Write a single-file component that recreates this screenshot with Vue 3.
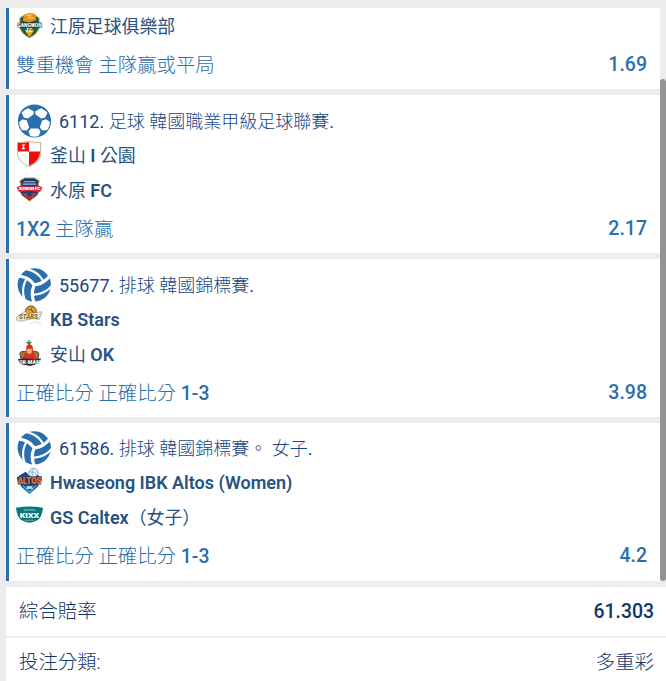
<template>
  <div class="betslip">
    <div class="events">
      <div v-for="(bet, i) in bets" :key="i" class="event">
        <div v-if="bet.sport" class="event-head">
          <svg v-if="bet.sport === 'football'" class="sport" viewBox="0 0 34 34">
            <circle cx="17" cy="17" r="16.6" fill="#2a6fac" />
            <g fill="#fff">
              <path d="M10.5 4.2 16.2 7.2V10.2L10.2 14.5 6.4 13.5 4 8.8Q7 5.2 10.5 4.2Z" />
              <path d="M23.5 4.2 17.8 7.2V10.2L23.8 14.5 27.6 13.5 30 8.8Q27 5.2 23.5 4.2Z" />
              <path d="M1.5 18 5.4 15.2 9.4 16.5 11.7 23.4 9.3 26.5 4.3 26.1Q1.8 22.5 1.5 18Z" />
              <path d="M32.5 18 28.6 15.2 24.6 16.5 22.3 23.4 24.7 26.5 29.7 26.1Q32.2 22.5 32.5 18Z" />
              <path d="M13.3 24.4H20.7L23 27.6 21.2 32Q17 33.3 12.8 32L11 27.6Z" />
            </g>
          </svg>
          <svg v-else class="sport" viewBox="4 4 496 504">
            <path
              fill="#2a6fac"
              transform="rotate(204 252 256)"
              d="M231.39 243.48a285.56 285.56 0 0 0-22.7-105.7c-90.8 42.4-157.5 122.4-180.3 216.8a249 249 0 0 0 56.9 81.1 333.87 333.87 0 0 1 146.1-192.2zm-36.9-134.4a284.23 284.23 0 0 0-57.4-70.7c-91 49.8-144.8 152.9-125 262.2 33.4-83.1 98.4-152 182.4-191.5zm187.6 165.1c8.6-99.8-27.3-197.5-97.5-264.4-14.7-1.7-51.6-5.5-98.9 8.5A333.87 333.87 0 0 1 279.19 241a285 285 0 0 0 102.9 33.18zm-124.7 9.5a286.33 286.33 0 0 0-80.2 72.6c82 57.3 184.5 75.1 277.5 47.8a247.15 247.15 0 0 0 42.2-89.9 336.1 336.1 0 0 1-80.9 10.4c-54.6-.1-108.9-14.1-158.6-40.9zm-98.3 99.7c-15.2 26-25.7 54.4-32.1 84.2a247.07 247.07 0 0 0 289-22.1c-112.9 16.1-203.3-24.8-256.9-62.1zm180.3-360.6c55.3 70.4 82.5 161.2 74.6 253.6a286.59 286.59 0 0 0 89.7-14.2c0-2 .3-4 .3-6 0-107.8-68.7-199.1-164.6-233.4z"
            />
          </svg>
          <span class="label"
            ><span v-for="(run, r) in runs(bet.title)" :key="r" :class="{ latin: run.latin }">{{ run.text }}</span></span
          >
        </div>
        <div v-for="team in bet.teams" :key="team.name" class="team">
          <svg class="logo" viewBox="0 0 28 28">
            <g v-if="team.logo === 'gangwon'">
              <path d="M4 6Q14-2 24 6L24 17Q22 23 14 27 6 23 4 17Z" fill="#12604e" stroke="#d9b65a" />
              <path d="M7 9 8 3 14 .8 20 2 21 8 14 11Z" fill="#f28b1d" />
              <path d="M10 4 15 3 13 6 18 6" fill="none" stroke="#ffc64c" stroke-width="1.5" />
              <path d="M9 19 14 26 19 19Z" fill="#f5a32b" />
              <text x="14" y="15.5" class="mark gangwon">GANGWON</text>
              <text x="14" y="20.5" class="mark fc">FC</text>
            </g>
            <g v-else-if="team.logo === 'busan'">
              <path d="M1.5 1.5Q8 2 13.5 .5 19 2 25.5 1.5V13Q25 22 13.5 26.5 2 22 1.5 13Z" fill="#fff" stroke="#b3a16c" stroke-width=".8" />
              <path d="M2 2Q8 2.5 13.5 1V11H2ZM13.5 11H25Q25 21 13.5 26Z" fill="#f20d0d" />
              <path d="M6 3.5H9.5V4.5H8.5V7.5H9.5V8.5H6V7.5H7V4.5H6Z" fill="#fff" />
            </g>
            <g v-else-if="team.logo === 'suwon'">
              <path d="M4 5 9 2H19L24 5 23 10 26 12 22 20 14 26 6 20 2 12 5 10Z" fill="#173e73" stroke="#c6a453" />
              <path d="M8 6H20M7 8.5H21" stroke="#a9bfd8" stroke-width="1.2" />
              <path d="M.5 12 4 10 14 11 24 10 27.5 12 25 16.5 14 15.5 3 16.5Z" fill="#d62d4b" />
              <path d="M6.5 17.5H21.5L19 21 14 24.5 9 21Z" fill="#c72b42" />
              <path d="M12 16H16V21H12Z" fill="#173e73" />
              <text x="14" y="14.7" class="mark suwon">SUWON FC</text>
            </g>
            <g v-else-if="team.logo === 'stars'">
              <circle cx="15.5" cy="6.5" r="5.5" fill="#e9a51f" stroke="#554021" />
              <path d="M12 4Q18 5 19 11M17 2Q14 6 20 8" fill="none" stroke="#6b481b" stroke-width=".8" />
              <path d="M1 12 7 8 9 6 12 9 27 7 24 15 18 14 4 17 0 15Z" fill="#ede8d8" stroke="#796b4e" stroke-width=".5" />
              <text x="13" y="15" class="mark stars">STARS</text>
              <path d="M15 20 20 17 26 20" fill="none" stroke="#bbb" stroke-width=".6" />
            </g>
            <g v-else-if="team.logo === 'okman'">
              <path d="M6 12Q3 12 5 19H23Q25 12 21 12Z" fill="#9e783e" stroke="#574329" />
              <path d="M13.5 5V0M13.5 4 11 2M13.5 4 16 2" stroke="#288851" stroke-width="1.4" />
              <path d="M10 12 11 6 13.5 3.5 17 6 18 12 21 20H7Z" fill="#d92f20" />
              <path d="M11 9H16.5V13L14 15 11 13Z" fill="#efad7d" />
              <path d="M2 20 8 19 20 20 26 19 24 24 15 27 4 25Z" fill="#342724" />
              <text x="14" y="24.5" class="mark okman">OK·MAN</text>
            </g>
            <g v-else-if="team.logo === 'altos'">
              <path d="M3 8 10 4 14 8 20 5 25 9 23 19 14 27 5 19Z" fill="#164d86" />
              <path d="M6 18 14 26.5 22 18 20 18 14 23.5 8 18Z" fill="#2eadd9" />
              <circle cx="18" cy="5" r="4.8" fill="#e4edf5" stroke="#648eb8" stroke-width=".7" />
              <path d="M14 4Q19 3 22 8M18 1Q15 5 18 9" fill="none" stroke="#7c9cba" stroke-width=".7" />
              <path d="M1 9 27 8.5 26 17H2Z" fill="#24395f" />
              <text x="14" y="16.5" textLength="25" lengthAdjust="spacingAndGlyphs" class="mark altos">ALTOS</text>
              <text x="14" y="22" class="mark ibk">IBK</text>
            </g>
            <g v-else-if="team.logo === 'kixx'">
              <path d="M0 5Q14 2 28 5 27 15 22 18 14 23 6 18 1 15 0 5Z" fill="#08777b" />
              <path d="M8 7.5Q14 6.5 20 7.5" fill="none" stroke="#99d3d0" />
              <text x="14" y="15.5" textLength="20" lengthAdjust="spacingAndGlyphs" class="mark kixx">KIXX</text>
              <path d="M9 18H19" stroke="#72bbb8" stroke-width=".8" />
            </g>
          </svg>
          <span class="label"
            ><span v-for="(run, r) in runs(team.name)" :key="r" :class="{ latin: run.latin }">{{ run.text }}</span></span
          >
        </div>
        <div class="market">
          <span class="label"
            ><span v-for="(run, r) in runs(bet.market)" :key="r" :class="{ latin: run.latin }">{{ run.text }}</span></span
          >
          <span class="odds">{{ bet.odds }}</span>
        </div>
      </div>
      <div class="scrollbar"></div>
    </div>
    <div class="summary">
      <span class="label">綜合賠率</span>
      <span class="total">61.303</span>
    </div>
    <div class="summary">
      <span class="label">投注分類:</span>
      <span class="label">多重彩</span>
    </div>
  </div>
</template>

<script setup>
const bets = [
  {
    teams: [{ name: "江原足球俱樂部", logo: "gangwon" }],
    market: "雙重機會 主隊贏或平局",
    odds: "1.69",
  },
  {
    sport: "football",
    title: "6112. 足球 韓國職業甲級足球聯賽.",
    teams: [
      { name: "釜山 I 公園", logo: "busan" },
      { name: "水原 FC", logo: "suwon" },
    ],
    market: "1X2 主隊贏",
    odds: "2.17",
  },
  {
    sport: "volleyball",
    title: "55677. 排球 韓國錦標賽.",
    teams: [
      { name: "KB Stars", logo: "stars" },
      { name: "安山 OK", logo: "okman" },
    ],
    market: "正確比分 正確比分 1-3",
    odds: "3.98",
  },
  {
    sport: "volleyball",
    title: "61586. 排球 韓國錦標賽。 女子.",
    teams: [
      { name: "Hwaseong IBK Altos (Women)", logo: "altos" },
      { name: "GS Caltex（女子）", logo: "kixx" },
    ],
    market: "正確比分 正確比分 1-3",
    odds: "4.2",
  },
];

// latin and chinese parts are set in different weights
function runs(text) {
  return text
    .split(/([\x20-\x7e]+)/)
    .filter(Boolean)
    .map((part) => ({ text: part, latin: /^[\x20-\x7e]/.test(part) }));
}
</script>

<style>
body {
  margin: 0;
  background: #ececec;
}
</style>

<style scoped>
.betslip {
  box-sizing: border-box;
  height: 681px;
  padding: 8px 0 0 6px;
  overflow: hidden;
  background: #ececec;
  font-family: Roboto, "Noto Sans CJK TC", sans-serif;
  font-weight: 300;
}

.events {
  position: relative;
  display: flex;
  flex-direction: column;
  gap: 6px;
  padding-right: 6px;
  margin-bottom: 6px;
}

.event {
  box-sizing: border-box;
  height: 158px;
  padding: 8px 13px 0 7px;
  border-left: 3px solid #2a6fac;
  background: #fff;
}

.event:first-child {
  height: 81px;
  padding-top: 1px;
}

.event:nth-child(4) {
  padding-top: 7px;
}

.label {
  white-space: pre;
}

.event-head {
  display: flex;
  align-items: center;
  gap: 7px;
  height: 35px;
  padding-left: 1px;
  color: #1a4582;
  font-size: 18px;
}

.event-head .label {
  padding-bottom: 2px;
}

.event-head .latin {
  font-weight: 400;
}

.sport {
  width: 35px;
  height: 34px;
}

.team {
  display: flex;
  align-items: center;
  gap: 7px;
  height: 35px;
  color: #28527f;
  font-size: 17.9px;
  font-weight: 400;
  line-height: 24px;
}

.team .latin {
  font-size: 18px;
  font-weight: 600;
}

.logo {
  width: 27px;
  height: 27px;
  margin-bottom: 3px;
  overflow: visible;
}

.market {
  display: flex;
  align-items: center;
  justify-content: space-between;
  height: 41px;
  color: #2a6fac;
  font-size: 19.5px;
}

.market .label {
  padding-bottom: 3px;
  font-size: 19.4px;
}

.market .latin,
.odds {
  font-weight: 500;
}

.scrollbar {
  position: absolute;
  top: 71px;
  right: 0;
  width: 6px;
  height: 502px;
  border-radius: 3px;
  background: #939393;
}

.summary {
  display: flex;
  align-items: center;
  justify-content: space-between;
  box-sizing: border-box;
  height: 49px;
  margin-bottom: 2px;
  padding: 0 12px 0 13px;
  background: #fff;
  color: #10346c;
  font-size: 19.4px;
}

.summary .label {
  padding-bottom: 5px;
}

.total {
  font-weight: 500;
}

.mark {
  font-family: Roboto, sans-serif;
  font-weight: 900;
  text-anchor: middle;
  fill: #fff;
}

.gangwon {
  font-size: 5px;
  stroke: #24332e;
  stroke-width: 1px;
  paint-order: stroke;
}

.fc {
  font-size: 5px;
}

.suwon {
  font-size: 4.5px;
}

.stars {
  font-size: 6.5px;
  font-style: italic;
  fill: #8b6f35;
}

.okman {
  font-size: 5.5px;
}

.altos {
  font-size: 9px;
  fill: #f0722e;
}

.ibk {
  font-size: 4px;
}

.kixx {
  font-size: 7px;
}
</style>
